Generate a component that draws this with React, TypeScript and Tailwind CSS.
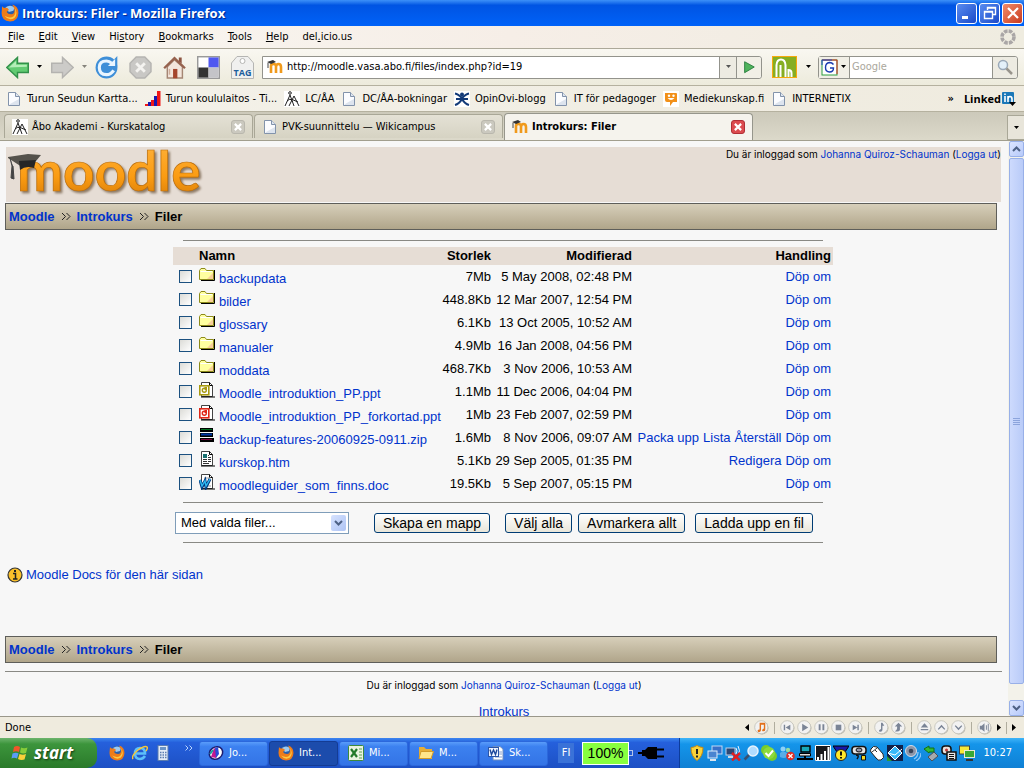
import { ReactNode } from 'react'
import clsx from 'clsx'

interface IFileRow {
  name: string
  kind: 'folder' | 'ppt' | 'pptRed' | 'zip' | 'htm' | 'doc'
  size: string
  modified: string
  actions: string[]
}

const files: IFileRow[] = [
  { name: 'backupdata', kind: 'folder', size: '7Mb', modified: '5 May 2008, 02:48 PM', actions: ['Döp om'] },
  { name: 'bilder', kind: 'folder', size: '448.8Kb', modified: '12 Mar 2007, 12:54 PM', actions: ['Döp om'] },
  { name: 'glossary', kind: 'folder', size: '6.1Kb', modified: '13 Oct 2005, 10:52 AM', actions: ['Döp om'] },
  { name: 'manualer', kind: 'folder', size: '4.9Mb', modified: '16 Jan 2008, 04:56 PM', actions: ['Döp om'] },
  { name: 'moddata', kind: 'folder', size: '468.7Kb', modified: '3 Nov 2006, 10:53 AM', actions: ['Döp om'] },
  { name: 'Moodle_introduktion_PP.ppt', kind: 'ppt', size: '1.1Mb', modified: '11 Dec 2006, 04:04 PM', actions: ['Döp om'] },
  { name: 'Moodle_introduktion_PP_forkortad.ppt', kind: 'pptRed', size: '1Mb', modified: '23 Feb 2007, 02:59 PM', actions: ['Döp om'] },
  {
    name: 'backup-features-20060925-0911.zip',
    kind: 'zip',
    size: '1.6Mb',
    modified: '8 Nov 2006, 09:07 AM',
    actions: ['Packa upp', 'Lista', 'Återställ', 'Döp om'],
  },
  { name: 'kurskop.htm', kind: 'htm', size: '5.1Kb', modified: '29 Sep 2005, 01:35 PM', actions: ['Redigera', 'Döp om'] },
  { name: 'moodleguider_som_finns.doc', kind: 'doc', size: '19.5Kb', modified: '5 Sep 2007, 05:15 PM', actions: ['Döp om'] },
]

function Icon({ size = 16, children }: { size?: number; children: ReactNode }) {
  return (
    <svg width={size} height={size} viewBox="0 0 16 16" className="shrink-0" aria-hidden="true">
      {children}
    </svg>
  )
}

/* ---------- shared icons ---------- */

function FirefoxIcon({ size = 18 }: { size?: number }) {
  return (
    <Icon size={size}>
      <circle cx="8" cy="8" r="7" fill="#2c5fa8" />
      <path d="M4 3Q8 0 12 3L11 6L7 7Z" fill="#9ccaf2" />
      <path d="M1 2Q2 4 4 3.500Q6 3 7 5L5 7Q6 9 9 9Q12 9 12 5Q11 2 10 .5Q15.500 2 15.500 8Q15 15.500 8 15.500Q.5 15 .5 8Z" fill="#ee7c1a" />
      <path d="M12 3Q14 8 11 11Q8 13 3 10.500Q7 15.500 12 12.500Q15.500 8 12 3Z" fill="#fdcb42" />
    </Icon>
  )
}

function PageIcon() {
  return (
    <Icon>
      <path d="M2.500 1.500H9.500L13.500 5.500V14.500H2.500Z" fill="#fbfcff" stroke="#8293ab" />
      <path d="M9.500 1.500V5.500H13.500" fill="#dfe6f0" stroke="#8293ab" />
      <path d="M3.500 14H13V8L4 13Z" fill="#dde4ee" />
    </Icon>
  )
}

function ArkenIcon() {
  return (
    <Icon>
      <rect width="16" height="16" fill="#fff" />
      <g stroke="#222" fill="none" strokeWidth="1">
        <circle cx="6" cy="2" r="1.300" />
        <path d="M1 15L6 4L10 15M3 10L6 8L9 11M5 15L10 5L15 15M7 8L14 11" />
      </g>
    </Icon>
  )
}

function MoodleFavicon() {
  return (
    <Icon>
      <path d="M4 14V7Q4 5 6.500 5Q9 5 9 7V14M9 8Q9 5 11.500 5Q14 5 14 8V14" fill="none" stroke="#f09a1c" strokeWidth="2.600" />
      <path d="M0 3L6 1L9 3L4 5Z" fill="#333" />
      <path d="M1 4V9" stroke="#444" />
    </Icon>
  )
}

function Caret({ className = 'fill-black' }: { className?: string }) {
  return (
    <svg width="7" height="4" viewBox="0 0 7 4" className={clsx('shrink-0', className)} aria-hidden="true">
      <path d="M1 0H6L3.500 3Z" />
    </svg>
  )
}

function FileIcon({ kind }: { kind: IFileRow['kind'] }) {
  if (kind === 'folder') {
    return (
      <Icon>
        <path d="M2 13.500H15.500V3" fill="none" stroke="#000" />
        <path d="M.5 3.500L2 1.500H6L7.500 3.500H14.500V12.500H.5Z" fill="#ffffa0" stroke="#8d8b1a" />
        <path d="M8 12L14 6V12Z" fill="#f8cf9a" />
        <path d="M1.500 4.500H13" stroke="#fff" />
      </Icon>
    )
  }
  if (kind === 'zip') {
    return (
      <Icon>
        <path d="M1 0H14V4H1ZM1 5H14V9H1ZM1 10H15V14H1Z" fill="#000" />
        <path d="M2 1.500H13" stroke="#007020" />
        <path d="M2 6.500H13" stroke="#0038a8" strokeWidth="2" />
        <path d="M2 11.500H13" stroke="#800040" />
      </Icon>
    )
  }
  const accent = kind === 'ppt' ? '#a89a10' : '#e02818'
  return (
    <Icon>
      <path d="M2.500 .5H10.500L13.500 3.500V14.500H2.500Z" fill="#fff" stroke="#444" />
      <path d="M10.500 .5V3.500H13.500M2 15H16" fill="none" stroke="#000" />
      {kind === 'htm' && (
        <>
          <rect x="4" y="3" width="4" height="4" fill="#187070" />
          <path d="M9 4.500H10M9 6.500H12M4 8.500H8M9 8.500H12M4 10.500H8M9 10.500H12M4 12.500H10" stroke="#333" />
        </>
      )}
      {kind === 'doc' && (
        <>
          <path d="M5 4H12M5 12H12" stroke="#999" />
          <path d="M1 6L3 13L6 7L7 13L11 5" fill="none" stroke="#003a80" strokeWidth="3" />
          <path d="M1 6L3 12L6 7L7 12L11 5" fill="none" stroke="#30b8f0" strokeWidth="1.400" />
        </>
      )}
      {(kind === 'ppt' || kind === 'pptRed') && (
        <>
          <rect x=".8" y="3.800" width="9" height="9" fill="#fff" stroke={accent} strokeWidth="1.600" />
          <circle cx="5.300" cy="8.300" r="2" fill="#fff" stroke={accent} strokeWidth="1.400" />
          <path d="M5.500 8V5H8V8Z" fill={accent} />
        </>
      )}
    </Icon>
  )
}

/* ---------- browser chrome ---------- */

function TitleBar() {
  const box = 'size-[21px] rounded-[3px] border border-white flex items-center justify-center'
  return (
    <header className="flex h-[26px] shrink-0 items-center gap-[3px] bg-linear-to-b from-[#3c90f8] via-[#0054e3] via-20% to-[#0062f8] px-[1px]">
      <FirefoxIcon />
      <h1 className="flex-1 font-[Open_Sans,sans-serif] text-[13px] font-bold text-white [text-shadow:1px_1px_1px_#00218a]">
        Introkurs: Filer - Mozilla Firefox
      </h1>
      <div className="flex gap-[2px]">
        <button aria-label="Minimize" className={clsx(box, 'bg-linear-to-br from-[#5a8cf0] to-[#1c48c8]')}>
          <Icon><path d="M3 12.500H9" stroke="#fff" strokeWidth="3" /></Icon>
        </button>
        <button aria-label="Restore" className={clsx(box, 'bg-linear-to-br from-[#5a8cf0] to-[#1c48c8]')}>
          <Icon>
            <path d="M5.500 5V2.500H13.500V9.500H11M5 3H14" fill="none" stroke="#fff" strokeWidth="1.400" />
            <path d="M2.500 6.500H10.500V13.500H2.500ZM2 7H11" fill="none" stroke="#fff" strokeWidth="1.400" />
          </Icon>
        </button>
        <button aria-label="Close" className={clsx(box, 'bg-linear-to-br from-[#f08a68] to-[#c8381c]')}>
          <Icon><path d="M3 3L13 13M13 3L3 13" stroke="#fff" strokeWidth="2.200" /></Icon>
        </button>
      </div>
    </header>
  )
}

const menus: [string, string, string][] = [
  ['', 'F', 'ile'],
  ['', 'E', 'dit'],
  ['', 'V', 'iew'],
  ['Hi', 's', 'tory'],
  ['', 'B', 'ookmarks'],
  ['', 'T', 'ools'],
  ['', 'H', 'elp'],
  ['del', '.', 'icio.us'],
]

function MenuBar() {
  return (
    <nav className="flex h-[23px] shrink-0 items-center gap-[14px] border-b border-[#aca899] bg-linear-to-r from-[#f9f7f2] via-[#f6eee7] to-[#efece0] px-2">
      {menus.map(([pre, key, post]) => (
        <button key={pre + key + post}>
          {pre}
          <u>{key}</u>
          {post}
        </button>
      ))}
      <span className="ml-auto">
        <Icon>
          <circle cx="8" cy="8" r="6" fill="none" stroke="#aaa6a6" strokeWidth="3.600" strokeDasharray="3.600 1.100" />
        </Icon>
      </span>
    </nav>
  )
}

function Toolbar() {
  return (
    <div className="flex h-[37px] shrink-0 items-center border-b border-[#b5b19f] bg-linear-to-b from-[#f9f7f1] to-[#edebdc] px-[6px]">
      <div className="flex items-center gap-[7px]">
        <button aria-label="Back">
          <Icon size={23}>
            <path d="M.5 8L8 1V5H15.500V11.500H8V15Z" fill="#62cb72" stroke="#32914a" />
            <path d="M2 8L7 3.500V6H14.500V7.500Z" fill="#b4eeb8" />
          </Icon>
        </button>
        <Caret />
        <button aria-label="Forward" className="ml-[1px]">
          <Icon size={23}>
            <path d="M15.500 8L8 1V5H.5V11.500H8V15Z" fill="#cccbc8" stroke="#b4b3b0" />
          </Icon>
        </button>
        <Caret className="fill-[#85837c]" />
        <button aria-label="Reload">
          <Icon size={23}>
            <circle cx="8" cy="8" r="7.600" fill="#3f8fd8" />
            <path d="M15.500 0V7.500H8.500Z" fill="#3f8fd8" />
            <path d="M13 10Q11 13 8 13Q3 13 3 8Q3 3.500 8 3.500Q10 3.500 11.500 5" fill="none" stroke="#e9f5ff" strokeWidth="2.200" />
            <path d="M14 2V7H9Z" fill="#e9f5ff" />
          </Icon>
        </button>
      </div>
      <div className="ml-[11px] flex items-center gap-[11px]">
        <button aria-label="Stop">
          <Icon size={23}>
            <path d="M5 .7H11L15.300 5V11L11 15.300H5L.7 11V5Z" fill="#c9c8c5" stroke="#b5b4b1" />
            <path d="M5 5L11 11M11 5L5 11" stroke="#f4f3f0" strokeWidth="2" />
          </Icon>
        </button>
        <button aria-label="Home">
          <Icon size={23}>
            <path d="M3 7.500L8 2.500L13.500 7.500V15.300H3Z" fill="#f3e6dc" stroke="#a58674" />
            <path d="M11 1H13V5L11 4Z" fill="#8c5442" />
            <path d="M.8 8.500L8 1.500L15.300 8.500" fill="none" stroke="#96624e" strokeWidth="1.600" />
            <path d="M7 9H10V15.500H7Z" fill="#a5462d" />
            <path d="M4.500 9V13" stroke="#cfae9a" />
          </Icon>
        </button>
        <button aria-label="del.icio.us">
          <Icon size={23}>
            <rect x=".5" y=".5" width="15" height="15" fill="#fff" stroke="#999" />
            <rect x="8" y="1" width="7" height="7" fill="#5058f0" />
            <rect x="1" y="8" width="7" height="7" fill="#333" />
            <rect x="8" y="8" width="7" height="7" fill="#c4c4c8" />
          </Icon>
        </button>
        <button aria-label="Tag">
          <svg width="23" height="23" viewBox="0 0 23 23">
            <path d="M.5 22.500V7L6 .5H17L22.500 7V22.500Z" fill="#f0f0ef" stroke="#b5b5b3" />
            <circle cx="11.500" cy="5" r="2.500" fill="#fff" stroke="#b5b5b3" />
            <text x="11.500" y="20" textAnchor="middle" className="fill-[#1c5e9c] font-[Open_Sans,sans-serif] text-[9px] font-bold">TAG</text>
          </svg>
        </button>
      </div>
      <div className="ml-[8px] flex h-[23px] min-w-0 flex-1 items-center rounded-r-[3px] border border-[#93938c] bg-white pl-1">
        <MoodleFavicon />
        <input aria-label="Location" defaultValue="http://moodle.vasa.abo.fi/files/index.php?id=19" className="ml-1 min-w-0 flex-1 outline-none" />
        <button aria-label="History" className="flex h-full w-[17px] items-center justify-center border-l border-[#93938c] bg-[#edebe2]">
          <Caret className="fill-[#555]" />
        </button>
        <button aria-label="Go" className="flex h-full w-[25px] items-center justify-center rounded-r-[3px] border-l border-[#93938c] bg-[#f1efe6]">
          <Icon size={14}><path d="M3 2L14 8L3 14.500Z" fill="#4fb35c" stroke="#247a3a" /></Icon>
        </button>
      </div>
      <button aria-label="Netvibes" className="ml-[10px] flex items-center gap-2">
        <svg width="25" height="22" viewBox="0 0 25 22">
          <rect x=".5" y=".5" width="24" height="21" fill="#86ae22" stroke="#f7a80c" />
          <path d="M4.500 21V9Q5 3.500 9 3.500Q13 3.500 13.500 9V21M8.500 21V9M16.500 21V14Q19.500 14 19.500 17V21" fill="none" stroke="#fff" strokeWidth="2" />
        </svg>
        <Caret />
      </button>
      <div className="ml-[6px] flex h-[23px] w-[200px] items-center rounded-[3px] border border-[#93938c] bg-white">
        <button aria-label="Search engine" className="flex h-full w-[31px] items-center justify-center gap-[2px] border-r border-[#93938c] bg-[#f1efe6]">
          <svg width="17" height="17" viewBox="0 0 17 17">
            <rect x="1" y="1" width="15" height="15" fill="#fff" stroke="#2c9e3e" />
            <path d="M1 1H16V15" fill="none" stroke="#d92a20" />
            <path d="M1 6V1H11" fill="none" stroke="#2048c8" />
            <path d="M12.500 5.500Q11 3.500 8.500 3.500Q4.500 4 4.500 8.500Q4.500 13 8.500 13Q12.500 13 12.500 9H9" fill="none" stroke="#1a3cb0" strokeWidth="1.400" />
          </svg>
          <Caret />
        </button>
        <input aria-label="Search" placeholder="Google" className="min-w-0 flex-1 pl-[2px] outline-none placeholder:text-[#aaa79c]" />
        <button aria-label="Search" className="flex h-full w-[25px] items-center justify-center rounded-r-[3px] border-l border-[#93938c] bg-[#edebe2]">
          <Icon>
            <circle cx="6" cy="6" r="4.500" fill="#e4f0fa" stroke="#9aa8b8" strokeWidth="1.500" />
            <path d="M9.500 9.500L15 15" stroke="#98948c" strokeWidth="2.500" />
          </Icon>
        </button>
      </div>
    </div>
  )
}

const bookmarks: { label: string; icon: ReactNode }[] = [
  { label: 'Turun Seudun Kartta...', icon: <PageIcon /> },
  {
    label: 'Turun koululaitos - Ti...',
    icon: (
      <Icon>
        <path d="M0 15V13H3V15ZM6 15V9H9V15ZM12 15V0H15.500V15Z" fill="#f01818" />
        <path d="M3 15V11H6V15ZM9 15V5H12V15Z" fill="#1818b0" />
      </Icon>
    ),
  },
  { label: 'LC/ÅA', icon: <ArkenIcon /> },
  { label: 'DC/ÅA-bokningar', icon: <PageIcon /> },
  {
    label: 'OpinOvi-blogg',
    icon: (
      <Icon>
        <rect width="16" height="16" fill="#fff" />
        <path d="M1 2.500Q4 3 8 7Q12 3 15 2.500M1 14Q5 13 8 8Q11 13 15 14M2 8H14" fill="none" stroke="#123a78" strokeWidth="2.200" />
        <circle cx="8" cy="3.500" r="2" fill="#123a78" />
      </Icon>
    ),
  },
  { label: 'IT för pedagoger', icon: <PageIcon /> },
  {
    label: 'Mediekunskap.fi',
    icon: (
      <Icon>
        <rect width="16" height="16" fill="#fff" />
        <path d="M2 2H13Q14 2 14 3V11H10L7 15V11H4Q2 11 2 9Z" fill="#f29018" />
        <path d="M4.500 7Q8 11 11.500 7Z" fill="#fff" />
        <circle cx="6" cy="4.800" r="1.200" fill="#fff" />
        <circle cx="10.500" cy="4.800" r="1.200" fill="#fff" />
      </Icon>
    ),
  },
  { label: 'INTERNETIX', icon: <PageIcon /> },
]

function BookmarksBar() {
  return (
    <nav className="flex h-[26px] shrink-0 items-center gap-[7px] border-b border-[#b5b19f] bg-linear-to-r from-[#f4f2ea] to-[#efebdf] px-[6px]">
      {bookmarks.map(item => (
        <a key={item.label} href="#" className="flex items-center gap-[5px] whitespace-nowrap">
          {item.icon}
          {item.label}
        </a>
      ))}
      <div className="ml-auto flex items-center gap-[10px] pr-[2px]">
        <button className="font-bold">»</button>
        <a href="#" className="flex items-center font-[Open_Sans,sans-serif] font-bold">
          Linked
          <svg width="14" height="15" viewBox="0 0 14 15" className="ml-[1px]">
            <rect width="12" height="12" y="1" rx="1" fill="#1b78b8" />
            <path d="M3 5V11M3 2.500V4M6 11V5M6 8Q6 5.500 8 5.500Q10 5.500 10 8V11" fill="none" stroke="#fff" strokeWidth="1.600" />
            <path d="M7 11H14L10.500 15Z" />
          </svg>
        </a>
      </div>
    </nav>
  )
}

function Tab({ icon, label, active = false }: { icon: ReactNode; label: string; active?: boolean }) {
  return (
    <div
      className={clsx(
        'flex w-[249px] shrink-0 items-center gap-1 rounded-t-[4px] border border-b-0 px-[7px]',
        active ? 'h-[27px] border-[#96968c] bg-[#f5f3ed] font-bold' : 'mb-[2px] h-[24px] border-[#a9a797] bg-linear-to-b from-[#e4e1d5] to-[#d6d3c3]'
      )}
    >
      {icon}
      <button className="flex-1 text-left">{label}</button>
      <button
        aria-label={'Close ' + label}
        className={clsx(
          'flex size-[14px] items-center justify-center rounded-[3px] border',
          active ? 'border-[#b02f36] bg-[#dc4b4f]' : 'border-[#b9b7ad] bg-[#cbc9bf]'
        )}
      >
        <Icon size={10}><path d="M3 3L13 13M13 3L3 13" stroke="#fff" strokeWidth="3.500" /></Icon>
      </button>
    </div>
  )
}

function TabStrip() {
  return (
    <div className="flex h-[29px] shrink-0 items-end gap-px border-b border-[#a19e8e] bg-linear-to-b from-[#ccc9ba] to-[#dcd9ca] pl-[4px]">
      <Tab icon={<ArkenIcon />} label="Åbo Akademi - Kurskatalog" />
      <Tab icon={<PageIcon />} label="PVK-suunnittelu — Wikicampus" />
      <Tab icon={<MoodleFavicon />} label="Introkurs: Filer" active />
      <button aria-label="All tabs" className="ml-auto flex h-[25px] w-[17px] items-center justify-center border border-r-0 border-[#a9a797] bg-[#e8e5da]">
        <Caret />
      </button>
    </div>
  )
}

/* ---------- page ---------- */

function MoodleLogo() {
  return (
    <svg width="200" height="55" viewBox="0 0 200 55" className="overflow-visible" role="img" aria-label="moodle">
      <defs>
        <linearGradient id="gold" x1="0" y1="0" x2="0" y2="1">
          <stop offset="0" stopColor="#ffb440" />
          <stop offset=".6" stopColor="#fb9c12" />
          <stop offset="1" stopColor="#d27808" />
        </linearGradient>
      </defs>
      <text
        x="11"
        y="44"
        fill="url(#gold)"
        stroke="#b96c0c"
        strokeWidth=".7"
        className="font-[Lato,sans-serif] text-[55px] font-bold [filter:drop-shadow(2px_2px_1px_#8d7a66)]"
      >
        moodle
      </text>
      <path d="M2 10L22 7L35 8L30 14L16 20L2 11Z" fill="#55524c" />
      <path d="M13 14L30 13L28 21Q20 18 14 23Z" fill="#262626" />
      <path d="M4 11L6 19L5 31L8 32L7 19" fill="#444" stroke="#444" />
    </svg>
  )
}

function Breadcrumb() {
  return (
    <nav className="mr-[11px] ml-[5px] flex h-[27px] items-center gap-[6px] border border-[#5e5e5a] bg-linear-to-b from-[#d7cfba] to-[#b0a58a] px-[3px] text-[13px] font-bold">
      <a href="#" className="text-[#0033cc]">Moodle</a>
      <Separator />
      <a href="#" className="text-[#0033cc]">Introkurs</a>
      <Separator />
      <span>Filer</span>
    </nav>
  )
}

function Separator() {
  return (
    <svg width="10" height="9" viewBox="0 0 10 9" aria-hidden="true">
      <path d="M1 1L4.500 4.500L1 8M5.500 1L9 4.500L5.500 8" fill="none" stroke="#222" />
    </svg>
  )
}

function LoginInfo() {
  return (
    <p className="font-[Inter,sans-serif] text-[10px] leading-[14px]">
      Du är inloggad som <a href="#" className="text-[#0033cc]">Johanna Quiroz-Schauman</a> (
      <a href="#" className="text-[#0033cc]">Logga ut</a>)
    </p>
  )
}

function FileTable() {
  return (
    <table className="w-[660px] table-fixed border-collapse text-right text-[13px]">
      <colgroup>
        <col className="w-[26px]" />
        <col className="w-[242px]" />
        <col className="w-[52px]" />
        <col className="w-[141px]" />
        <col />
      </colgroup>
      <thead>
        <tr className="h-[18px] bg-[#e6ddd5] leading-[18px]">
          <td />
          <th className="text-left">Namn</th>
          <th className="pr-[2px]">Storlek</th>
          <th className="pr-[2px]">Modifierad</th>
          <th className="pr-[2px]">Handling</th>
        </tr>
      </thead>
      <tbody>
        {files.map(file => (
          <tr key={file.name} className="h-[23px] whitespace-nowrap leading-[16px]">
            <td className="pl-[6px] text-left">
              <input
                type="checkbox"
                aria-label={file.name}
                className="block size-[13px] appearance-none border border-[#1c5180] bg-linear-to-br from-[#dcdcd7] to-white checked:bg-[#21a121]"
              />
            </td>
            <td className="text-left">
              <a href="#" className="flex items-start gap-1 text-[#0033cc]">
                <FileIcon kind={file.kind} />
                <span className="pt-1">{file.name}</span>
              </a>
            </td>
            <td className="pr-[2px]">{file.size}</td>
            <td className="pr-[2px]">{file.modified}</td>
            <td className="pr-[2px]">
              <span className="inline-flex gap-1">
                {file.actions.map(action => (
                  <a key={action} href="#" className="text-[#0033cc]">{action}</a>
                ))}
              </span>
            </td>
          </tr>
        ))}
      </tbody>
    </table>
  )
}

function XpButton({ children }: { children: ReactNode }) {
  return (
    <button className="h-[20px] rounded-[3px] border border-[#003c74] bg-linear-to-b from-white to-[#e9e6da] px-2 text-[14px] leading-[18px] whitespace-nowrap">
      {children}
    </button>
  )
}

function FileActions() {
  return (
    <form className="flex h-[39px] w-[660px] items-center pl-[2px] text-[13px]" onSubmit={e => e.preventDefault()}>
      <div className="relative">
        <select aria-label="Med valda filer" className="block h-[22px] w-[174px] appearance-none border border-[#7f9db9] bg-white pl-[5px]">
          <option>Med valda filer...</option>
        </select>
        <span className="pointer-events-none absolute top-[3px] right-[3px] flex h-[16px] w-[15px] items-center justify-center rounded-[2px] bg-linear-to-br from-[#d6e2ff] to-[#aec4f4]">
          <svg width="9" height="6" viewBox="0 0 9 6"><path d="M1 1L4.500 4.500L8 1" fill="none" stroke="#4d6185" strokeWidth="2" /></svg>
        </span>
      </div>
      <span className="ml-[25px] flex items-center">
        <XpButton>Skapa en mapp</XpButton>
      </span>
      <span className="ml-[15px] flex items-center gap-[6px]">
        <XpButton>Välj alla</XpButton>
        <XpButton>Avmarkera allt</XpButton>
      </span>
      <span className="ml-[10px] flex items-center">
        <XpButton>Ladda upp en fil</XpButton>
      </span>
    </form>
  )
}

function PageContent() {
  return (
    <main className="min-w-0 flex-1 overflow-hidden bg-[#f7f7f7] font-[Liberation_Sans,Arial,sans-serif] text-[13px] text-black">
      <div className="mt-[6px] mr-[7px] ml-[6px] flex h-[55px] items-start justify-between bg-[#e6ddd5]">
        <MoodleLogo />
        <LoginInfo />
      </div>
      <div className="mt-[1px]">
        <Breadcrumb />
      </div>
      <div className="mt-[10px] flex flex-col items-center pr-[2px]">
        <hr className="w-[640px] border-[#898984]" />
        <div className="mt-[6px] mb-[7px]">
          <FileTable />
        </div>
        <hr className="w-[640px] border-[#898984]" />
        <FileActions />
        <hr className="w-[640px] border-[#898984]" />
      </div>
      <a href="#" className="mt-[24px] ml-[7px] flex h-[16px] items-center gap-[3px] text-[#0033cc]">
        <Icon>
          <circle cx="8" cy="8" r="7" fill="#fbc02a" stroke="#333" strokeWidth="1.200" />
          <path d="M6 6.500H8.500V12M6 12H10.500" fill="none" stroke="#222" strokeWidth="1.500" />
          <rect x="7" y="3" width="2" height="2" fill="#222" />
        </Icon>
        Moodle Docs för den här sidan
      </a>
      <div className="mt-[53px]">
        <Breadcrumb />
      </div>
      <hr className="mt-[8px] mr-[6px] ml-[5px] border-[#898984]" />
      <footer className="flex flex-col items-center gap-3 pt-[6px]">
        <LoginInfo />
        <a href="#" className="text-[#0033cc]">Introkurs</a>
      </footer>
    </main>
  )
}

function ScrollBar() {
  const arrow = 'flex h-[16px] w-[15px] items-center justify-center rounded-[2px] border border-[#98b0e8] bg-linear-to-br from-[#dbe5ff] to-[#b7cafa]'
  return (
    <div className="flex w-[16px] shrink-0 flex-col items-center gap-px bg-[#f3f2ea]">
      <button aria-label="Scroll up" className={arrow}>
        <svg width="9" height="6" viewBox="0 0 9 6"><path d="M1 5L4.500 1.500L8 5" fill="none" stroke="#4d6185" strokeWidth="2" /></svg>
      </button>
      <div className="flex w-[15px] flex-1 flex-col items-center justify-center gap-[1px] rounded-[2px] border border-[#98b0e8] bg-linear-to-r from-[#cddafd] to-[#b9cbf8]">
        {[0, 1, 2, 3].map(i => (
          <span key={i} className="h-px w-[7px] bg-[#8ca4dc]" />
        ))}
      </div>
      <span className="h-[14px]" />
      <button aria-label="Scroll down" className={arrow}>
        <svg width="9" height="6" viewBox="0 0 9 6"><path d="M1 1L4.500 4.500L8 1" fill="none" stroke="#4d6185" strokeWidth="2" /></svg>
      </button>
    </div>
  )
}

/* ---------- status bar ---------- */

function MediaButton({ label, d, tone = '#7a8496' }: { label: string; d: string; tone?: string }) {
  return (
    <button aria-label={label}>
      <Icon size={15}>
        <circle cx="8.500" cy="8.500" r="7" fill="#b9b7ae" />
        <circle cx="7.700" cy="7.700" r="7" fill="#f2f2f2" stroke="#c8c6bd" />
        <path d={d} fill={tone} />
      </Icon>
    </button>
  )
}

function Divider() {
  return <span className="h-[12px] w-px bg-[#b0ad9e]" />
}

function SideArrow({ left = false }: { left?: boolean }) {
  return (
    <svg width="4" height="7" viewBox="0 0 4 7" aria-hidden="true">
      <path d={left ? 'M4 0V7L0 3.500Z' : 'M0 0V7L4 3.500Z'} />
    </svg>
  )
}

function StatusBar() {
  return (
    <div className="flex h-[22px] shrink-0 items-center border-t border-[#9a978a] bg-[#efebde] pl-[5px] pr-[8px]">
      <span className="flex-1">Done</span>
      <div className="flex items-center gap-[5px]">
        <SideArrow left />
        <MediaButton label="Player" tone="#e2711d" d="M6 3H12V10Q12 12 10 12Q8 12 9 10L10.500 9V5H7.500V11Q7 13 5 13Q3 12 4.500 10.500L6 10Z" />
        <Divider />
        <div className="flex gap-[2px]">
          <MediaButton label="Previous" d="M4 5H5.500V11H4ZM11 5V11L6 8Z" />
          <MediaButton label="Play" d="M5.500 4V12L12 8Z" />
          <MediaButton label="Pause" d="M5 4.500H7V11H5ZM9 4.500H11V11H9Z" />
          <MediaButton label="Stop playback" d="M5 5H11V11H5Z" />
          <MediaButton label="Next" d="M5 5V11L10 8ZM10 5H11.500V11H10Z" />
        </div>
        <Divider />
        <div className="flex gap-[2px]">
          <MediaButton label="Track" d="M7.500 3H9L11 6L9 6V11Q8 13 6 12.500Q4 11 7.500 9.500Z" />
          <MediaButton label="Jump" d="M8 3L12 7H9.500V11Q8 13 4 12Q7 11 6.500 7H4Z" />
        </div>
        <Divider />
        <div className="flex gap-[2px]">
          <MediaButton label="Eject" d="M8 3.500L12 8H4ZM4 9.500H12V11H4Z" />
          <MediaButton label="Up" d="M8 5L12 9.500L11 10.500L8 7.500L5 10.500L4 9.500Z" />
          <MediaButton label="Down" d="M8 11L12 6.500L11 5.500L8 8.500L5 5.500L4 6.500Z" />
        </div>
        <Divider />
        <MediaButton label="Volume" d="M3 6H5L8 3.500V12.500L5 10H3ZM9.500 5.500H10.500V10.500H9.500ZM11.500 4H12.500V12H11.500Z" />
        <SideArrow />
        <Divider />
        <SideArrow />
      </div>
    </div>
  )
}

/* ---------- taskbar ---------- */

function WindowsFlag() {
  return (
    <svg width="18" height="18" viewBox="0 0 18 18" aria-hidden="true">
      <path d="M3 3Q6 1 9 3L8 8Q5 6.500 2 8Z" fill="#f0562a" />
      <path d="M10 3.500Q13 5 16.500 3.500L15 9Q12 10 9 8.500Z" fill="#86cc3a" />
      <path d="M1.500 9.500Q5 8 7.500 9.500L6 14.500Q3 13 .5 14.500Z" fill="#5a9cf8" />
      <path d="M8.500 10Q12 11.500 15 10L13.500 15.500Q10 16.500 7 15Z" fill="#fcd03a" />
    </svg>
  )
}

const tasks: { label: string; icon: ReactNode; active?: boolean }[] = [
  {
    label: 'Jo...',
    icon: (
      <Icon>
        <ellipse cx="8" cy="8" rx="7" ry="6" fill="#fff" stroke="#1c1c70" strokeWidth="1.500" transform="rotate(-35 8 8)" />
        <path d="M3 12L6 3L10 6L8 13Z" fill="#c01890" />
        <path d="M7 3L10 2L11 9L8 13Z" fill="#2848d8" />
        <path d="M2 9L5 5" stroke="#18a0a0" strokeWidth="2" />
      </Icon>
    ),
  },
  { label: 'Int...', icon: <FirefoxIcon size={16} />, active: true },
  {
    label: 'Mi...',
    icon: (
      <Icon>
        <rect x=".5" y=".5" width="15" height="15" rx="1" fill="#e8f3e0" stroke="#3d8a3c" />
        <path d="M3 4L9 12M9 4L3 12" stroke="#237a2b" strokeWidth="2.200" />
        <path d="M11 4H14M11 7H14M11 10H14M11 13H14" stroke="#5ca252" />
      </Icon>
    ),
  },
  {
    label: 'M...',
    icon: (
      <Icon>
        <path d="M1 2H6L8 4H14V14H1Z" fill="#e5ae38" />
        <path d="M3 6.500H15.500L13 13.500H1Z" fill="#ffe58a" stroke="#d39b28" />
      </Icon>
    ),
  },
  {
    label: 'Sk...',
    icon: (
      <Icon>
        <path d="M5 1.500H12L15 4V15H5Z" fill="#fff" stroke="#6c8cc0" />
        <path d="M11 7H14M11 9H14M7 12H14" stroke="#86a0d0" />
        <rect x=".5" y="2.500" width="10" height="9" fill="#eef4ff" stroke="#2a55a8" />
        <path d="M2 4.500L3.500 9.500L5.500 5L7.500 9.500L9 4.500" fill="none" stroke="#1c489c" strokeWidth="1.400" />
      </Icon>
    ),
  },
]

const trayIcons: ReactNode[] = [
  <>
    <path d="M8 .5Q11 2.500 14 2.500Q14 11.500 8 15.500Q2 11.500 2 2.500Q5 2.500 8 .5Z" fill="#fbd338" stroke="#c78a10" />
    <path d="M8 4V9M8 10.500V12.500" stroke="#222" strokeWidth="2" />
  </>,
  <>
    <rect x="5" y="1" width="10" height="8" fill="#3870c8" stroke="#c0d8f4" />
    <rect x="1" y="6" width="9" height="7" fill="#4a84d0" stroke="#dcebfb" />
    <path d="M3 15H9" stroke="#dce4ee" strokeWidth="2" />
  </>,
  <>
    <rect x="1" y="3" width="9" height="7" fill="#2c4874" stroke="#c0d0e8" />
    <path d="M3 12H8" stroke="#cfd8e4" strokeWidth="2" />
    <path d="M11 3Q13 6 11 9M13 1Q16 6 13 10" fill="none" stroke="#e8f2ff" />
    <path d="M7 8L15 15.500M15 8L7 15.500" stroke="#e02020" strokeWidth="2.400" />
  </>,
  <>
    <path d="M7 9L1.500 14.500" stroke="#3a5070" strokeWidth="2.600" />
    <circle cx="10" cy="6" r="5" fill="#b0dcff" stroke="#e6f2fc" strokeWidth="1.500" />
  </>,
  <>
    <circle cx="5" cy="5" r="5" fill="#78cc2c" />
    <circle cx="11" cy="11" r="5" fill="#78cc2c" />
    <circle cx="8" cy="8" r="6" fill="#8cda3c" />
    <path d="M4.500 8L7.500 11L12 5.500" fill="none" stroke="#fff" strokeWidth="2" />
  </>,
  <>
    <circle cx="4" cy="4" r="2.500" fill="#8cd0f8" />
    <path d="M1 8Q4 5 8 8V12Q5 14 1 12Z" fill="#58aee8" />
    <circle cx="9" cy="5" r="2.200" fill="#98dca0" />
    <circle cx="11.500" cy="11" r="4.300" fill="#e02c24" />
    <path d="M9.500 9L13.500 13M13.500 9L9.500 13" stroke="#fff" strokeWidth="1.400" />
  </>,
  <>
    <path d="M4 1H13V7H4Z" fill="#18a8b8" stroke="#000" strokeWidth="1.400" />
    <path d="M2.500 8.500H13.500V11H2.500Z" fill="#ddd" stroke="#000" />
    <path d="M8 11V14M0 14H16" stroke="#000" strokeWidth="2" />
  </>,
  <>
    <rect width="16" height="16" fill="#18181c" />
    <path d="M2 12H4V15H2ZM5.500 9H7.500V15H5.500ZM9 6H11V15H9ZM12.500 2H14.500V15H12.500Z" fill="#fff" />
    <path d="M.5 .5H15.500V15.500H.5Z" fill="none" stroke="#fff" />
  </>,
  <>
    <path d="M0 1H16L8 13Z" fill="#1818a8" stroke="#000" />
    <circle cx="8" cy="10" r="5.500" fill="#ffe82a" stroke="#222" />
    <path d="M8 6.500V10.500M8 12V13.500" stroke="#000" strokeWidth="1.800" />
  </>,
  <>
    <rect x="1" y="1.500" width="14" height="7.500" rx="3" fill="#e4e4e4" stroke="#111" strokeWidth="1.500" />
    <ellipse cx="8" cy="5" rx="3" ry="2" fill="#99a" stroke="#111" />
    <path d="M10.500 10.500H14.500V15H10.500Z" fill="#f4d820" stroke="#111" />
    <path d="M5 10Q9 10 6 14" fill="none" stroke="#111" strokeWidth="1.500" />
  </>,
  <>
    <path d="M2 4Q4 0 8 2L14 9Q16 13 12 15Q9 16 7 13L2 7Q1 6 2 4Z" fill="#fff" stroke="#222" />
    <path d="M3 7L8 3M6 5L8 7" stroke="#333" />
  </>,
  <>
    <rect width="16" height="16" fill="#102048" />
    <path d="M8 1L15 8L8 15L1 8Z" fill="#38b8f8" stroke="#fff" />
    <path d="M1 8L8 10L15 4" fill="none" stroke="#fff" />
    <path d="M0 16L5 16L0 11Z" fill="#2c9c34" />
  </>,
  <>
    <circle cx="6" cy="6" r="5.500" fill="#8c96a8" stroke="#d4dce8" />
    <circle cx="6" cy="6" r="2.300" fill="#384458" />
    <path d="M9 14Q13 12 13 7M11 16Q16 13 16 8" fill="none" stroke="#8cc8fa" strokeWidth="1.300" />
  </>,
  <>
    <path d="M1 4L6 1V3H11V7H6V8Z" fill="#34b834" stroke="#107018" />
    <path d="M5 12L11 7L15 11L9 16Z" fill="#a6aaae" stroke="#4c5054" />
  </>,
  <>
    <rect x="1" y="1" width="9" height="8" rx="3" fill="#e8e0dc" stroke="#111" strokeWidth="1.500" />
    <circle cx="5.500" cy="5" r="1.500" fill="#c03838" />
    <rect x="6" y="7" width="9" height="8" fill="#e8e8e8" stroke="#111" strokeWidth="1.500" />
    <path d="M8 9.500H13M8 11.500H13M8 13.500H13" stroke="#111" />
  </>,
  <>
    <rect x=".5" y="1" width="10" height="8" fill="#f8e838" stroke="#444" />
    <rect x="5.500" y="5.500" width="10" height="7" fill="#38a838" stroke="#e8e8d8" />
    <path d="M7 15H14" stroke="#333" strokeWidth="2" />
  </>,
]

function Taskbar() {
  return (
    <footer className="flex h-[30px] shrink-0 items-stretch overflow-hidden bg-linear-to-b from-[#3c86f0] via-[#2560dc] via-15% to-[#1d50c4] text-white">
      <button className="flex w-[97px] shrink-0 items-center gap-[5px] rounded-r-[10px] bg-linear-to-b from-[#6cb46c] via-[#3c953c] via-20% to-[#2a7a2a] pl-[11px] font-[Open_Sans,sans-serif] text-[17px] font-bold italic [text-shadow:1px_1px_2px_#123a12]">
        <WindowsFlag />
        start
      </button>
      <div className="flex items-center gap-[7px] pl-[12px]">
        <a href="#" aria-label="Firefox"><FirefoxIcon size={16} /></a>
        <a href="#" aria-label="Internet Explorer">
          <Icon>
            <path d="M13 11Q11 14 8 14Q3 14 3 8.500Q3 3 8 3Q13 3 13 8.500H4" fill="none" stroke="#5cc0fa" strokeWidth="2.600" />
            <path d="M1 14Q-1 11 6 5Q13 0 15 2Q16 3 14 6" fill="none" stroke="#f8c838" strokeWidth="1.500" />
          </Icon>
        </a>
        <a href="#" aria-label="Calculator">
          <Icon>
            <rect x="3" y=".5" width="10" height="15" fill="#e4ecf6" stroke="#5a7cb0" />
            <rect x="5" y="2" width="6" height="3" fill="#6a94c8" />
            <path d="M5 7.500H12M5 10H12M5 12.500H12" stroke="#5a7cb0" strokeDasharray="1.500 1" strokeWidth="1.500" />
          </Icon>
        </a>
      </div>
      <button aria-label="More" className="flex w-[22px] items-start justify-end pt-[7px]">
        <svg width="8" height="6" viewBox="0 0 8 6"><path d="M.5 .5L3 3L.5 5.500M4.500 .5L7 3L4.500 5.500" fill="none" stroke="#b8d4ff" /></svg>
      </button>
      <div className="flex items-center gap-px pl-[6px]">
        {tasks.map(task => (
          <button
            key={task.label}
            className={clsx(
              'flex h-[25px] w-[69px] items-center gap-[5px] rounded-[3px] border pl-[8px]',
              task.active ? 'border-[#143c94] bg-[#1c4cac]' : 'border-[#2c68dc] bg-linear-to-b from-[#5a9cfa] via-[#3c81f0] via-20% to-[#3474e6]'
            )}
          >
            {task.icon}
            {task.label}
          </button>
        ))}
      </div>
      <div className="flex flex-1 items-center pl-[10px]">
        <span className="flex h-[20px] w-[16px] items-center justify-center bg-[#3a72d8]">FI</span>
        <div className="ml-[8px] flex h-[23px] w-[47px] items-center justify-center border border-white bg-[#88ff40] font-[Liberation_Sans,sans-serif] text-[14px] text-black">100%</div>
        <span className="h-[6px] w-[4px] border border-l-0 border-[#b4c4e8]" />
        <svg width="28" height="16" viewBox="0 0 28 16" className="ml-[4px]" aria-hidden="true">
          <path d="M1 8H6M19 4.500H27M19 11.500H27" stroke="#000" strokeWidth="2" />
          <path d="M5 5H8L11 2H20V14H11L8 11H5Z" />
        </svg>
      </div>
      <div className="flex shrink-0 items-center gap-[2px] border-l border-[#0c3c9c] bg-linear-to-b from-[#3cb4f8] via-[#1495ea] via-20% to-[#1080d4] pr-[12px] pl-[9px]">
        {trayIcons.map((icon, i) => (
          <Icon key={i}>{icon}</Icon>
        ))}
        <time className="ml-[6px]">10:27</time>
      </div>
    </footer>
  )
}

export default function App() {
  return (
    <div className="flex h-screen flex-col overflow-hidden font-[DejaVu_Sans_Condensed,Tahoma,sans-serif] text-[11px] leading-[16px] text-black">
      <TitleBar />
      <MenuBar />
      <Toolbar />
      <BookmarksBar />
      <TabStrip />
      <div className="flex min-h-0 flex-1">
        <PageContent />
        <ScrollBar />
      </div>
      <StatusBar />
      <Taskbar />
    </div>
  )
}
